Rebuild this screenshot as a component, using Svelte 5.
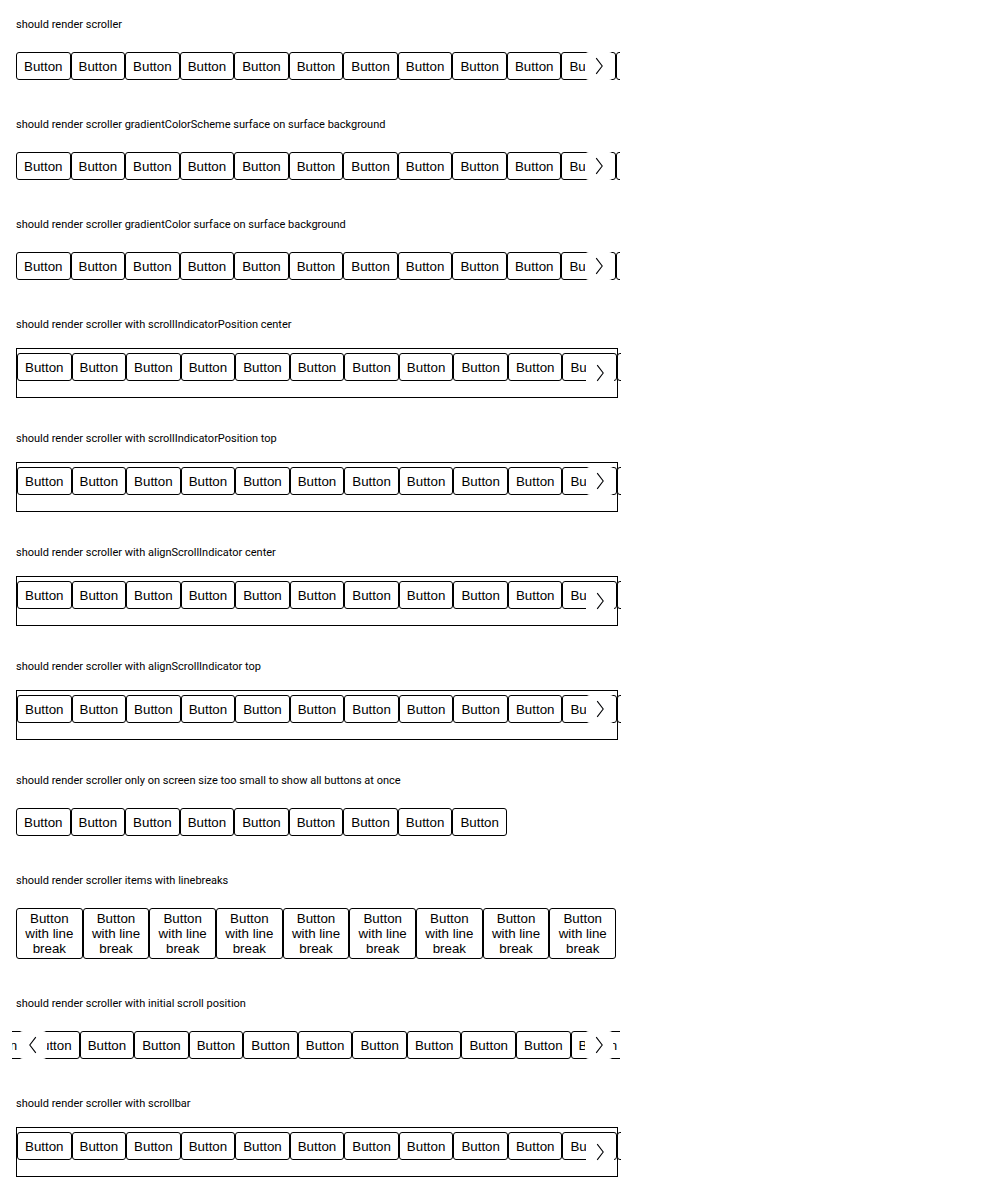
<script>
  const sections = [
    { title: 'should render scroller', next: true },
    { title: 'should render scroller gradientColorScheme surface on surface background', next: true },
    { title: 'should render scroller gradientColor surface on surface background', next: true },
    { title: 'should render scroller with scrollIndicatorPosition center', next: true, boxed: true },
    { title: 'should render scroller with scrollIndicatorPosition top', next: true, boxed: true, top: true },
    { title: 'should render scroller with alignScrollIndicator center', next: true, boxed: true },
    { title: 'should render scroller with alignScrollIndicator top', next: true, boxed: true, top: true },
    { title: 'should render scroller only on screen size too small to show all buttons at once', count: 9 },
    { title: 'should render scroller items with linebreaks', count: 9, breaks: true },
    { title: 'should render scroller with initial scroll position', next: true, prev: true, count: 14, scroll: 100 },
    { title: 'should render scroller with scrollbar', next: true, boxed: true }
  ];

  function startAt(node, left) {
    node.scrollLeft = left;
  }
</script>

<main>
  {#each sections as s}
    <section>
      <h2>{s.title}</h2>
      <div class="frame" class:boxed={s.boxed}>
        <div class="scroller" class:top={s.top}>
          <div class="track" use:startAt={s.scroll ?? 0}>
            {#each Array(s.count ?? 12) as _}
              <button type="button" class="item" class:fill={s.breaks}>
                {#if s.breaks}Button<br />with line<br />break{:else}Button{/if}
              </button>
            {/each}
          </div>
          {#if s.prev}
            <button type="button" class="indicator prev" aria-label="Previous">
              <svg viewBox="0 0 24 24" aria-hidden="true"><path d="M14.8 4.2 8.8 12l6 7.8" /></svg>
            </button>
          {/if}
          {#if s.next}
            <button type="button" class="indicator next" aria-label="Next">
              <svg viewBox="0 0 24 24" aria-hidden="true"><path d="M9.2 4.2l6 7.8-6 7.8" /></svg>
            </button>
          {/if}
        </div>
      </div>
    </section>
  {/each}
</main>

<style>
  :global(body) {
    margin: 0;
    background: #fff;
    color: #000;
  }
  main {
    display: flex;
    flex-direction: column;
    gap: 32px;
    padding: 16px;
  }
  section {
    display: flex;
    flex-direction: column;
    gap: 14px;
  }
  h2 {
    margin: 0;
    font-family: Roboto, sans-serif;
    font-size: 11px;
    font-weight: 400;
    line-height: 18px;
  }
  .frame {
    display: flex;
    width: 100%;
    max-width: 600px;
  }
  .boxed {
    min-height: 48px;
    border: 1px solid #000;
  }
  .scroller {
    position: relative;
    display: flex;
    flex: 1;
    align-items: center;
    min-width: 0;
    margin: 0 -4px;
  }
  .track {
    display: flex;
    flex: 1;
    align-self: flex-start;
    min-width: 0;
    padding: 4px;
    overflow-x: auto;
    scrollbar-width: none;
  }
  .item {
    flex: none;
    min-height: 28px;
    margin: 0;
    padding: 2px 7px;
    border: 1px solid #000;
    border-radius: 3px;
    background: #fff;
    color: #000;
    font-family: 'Liberation Sans', Arial, sans-serif;
  }
  .fill {
    flex: 1 0 auto;
  }
  .indicator {
    position: absolute;
    display: grid;
    place-items: center;
    width: 28px;
    height: 28px;
    padding: 0;
    border: 0;
    border-radius: 4px;
    background: #fff;
  }
  .top .indicator {
    top: 4px;
  }
  .next {
    right: 7px;
  }
  .prev {
    left: 7px;
  }
  svg {
    width: 24px;
    height: 24px;
    fill: none;
    stroke: #010205;
    stroke-width: 1.1;
  }
</style>
